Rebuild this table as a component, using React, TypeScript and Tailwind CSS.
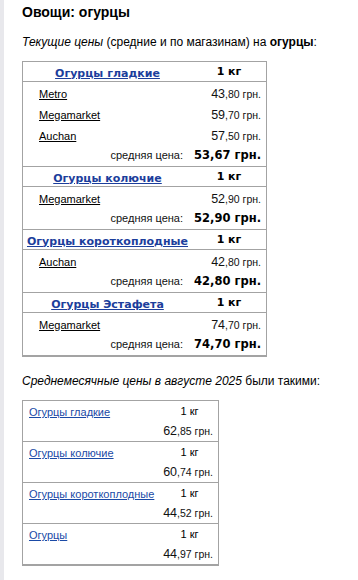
const groups = [
  {
    name: "Огурцы гладкие",
    shops: [
      { shop: "Metro", int: "43", frac: "80" },
      { shop: "Megamarket", int: "59", frac: "70" },
      { shop: "Auchan", int: "57", frac: "50" },
    ],
    avg: "53,67",
  },
  { name: "Огурцы колючие", shops: [{ shop: "Megamarket", int: "52", frac: "90" }], avg: "52,90" },
  { name: "Огурцы короткоплодные", shops: [{ shop: "Auchan", int: "42", frac: "80" }], avg: "42,80" },
  { name: "Огурцы Эстафета", shops: [{ shop: "Megamarket", int: "74", frac: "70" }], avg: "74,70" },
];

const monthly = [
  { name: "Огурцы гладкие", int: "62", frac: "85" },
  { name: "Огурцы колючие", int: "60", frac: "74" },
  { name: "Огурцы короткоплодные", int: "44", frac: "52" },
  { name: "Огурцы", int: "44", frac: "97" },
];

const verdana = "font-['DejaVu_Sans',Verdana,sans-serif]";

function Price({ int, frac }: { int: string; frac: string }) {
  return (
    <span className="whitespace-nowrap text-[12.5px] text-[#111]">
      {int}
      <span className="text-[10.5px]">,{frac} грн.</span>
    </span>
  );
}

export default function App() {
  return (
    <div className="flex min-h-[580px] bg-white font-['Liberation_Sans',Arial,sans-serif] text-black">
      <div className="w-[4px] shrink-0 bg-[#e8e8ec]" />
      <div className="pl-[18px] pt-[2px]">
        <h1 className="text-[14px] font-bold leading-[20px]">Овощи: огурцы</h1>

        <p className="mt-[11px] text-[12px] leading-[18px]">
          <i>Текущие цены</i> (средние и по магазинам) на <b>огурцы</b>:
        </p>

        <div className="mt-[10px] w-[245px] border border-b-2 border-[#a3a3a3]">
          {groups.map((g, gi) => (
            <div key={g.name} className={gi > 0 ? "border-t border-[#a3a3a3]" : ""}>
              <div className="flex h-[20px] items-center border-b border-[#a3a3a3] leading-none">
                <div className="w-[169px] text-center">
                  <a href="#" className={`${verdana} text-[11px] font-bold text-[#1c3e9c] underline`}>
                    {g.name}
                  </a>
                </div>
                <div className={`flex-1 text-center ${verdana} text-[11px] font-bold`}>1 кг</div>
              </div>
              {g.shops.map((s) => (
                <div key={s.shop} className="flex h-[21px] items-center">
                  <div className="w-[169px] pl-[16px]">
                    <a href="#" className="text-[11px] text-black underline">
                      {s.shop}
                    </a>
                  </div>
                  <div className="flex-1 pr-[5px] text-right">
                    <Price int={s.int} frac={s.frac} />
                  </div>
                </div>
              ))}
              <div className="flex h-[21px] items-center">
                <div className="w-[169px] pr-[9px] text-right text-[11px] text-[#111]">средняя цена:</div>
                <div className={`flex-1 whitespace-nowrap pr-[5px] text-right ${verdana} text-[11.5px] font-bold`}>
                  {g.avg} грн.
                </div>
              </div>
            </div>
          ))}
        </div>

        <p className="mt-[15px] text-[12px] leading-[18px]">
          <i>Среднемесячные цены в августе 2025</i> были такими:
        </p>

        <div className="mt-[10px] w-[197px] border border-b-2 border-[#a3a3a3]">
          {monthly.map((m, i) => (
            <div key={m.name} className={i > 0 ? "border-t border-[#a3a3a3]" : ""}>
              <div className="flex h-[20px] items-center">
                <div className="w-[138px] pl-[6px]">
                  <a href="#" className="whitespace-nowrap text-[11px] text-[#1a4aa6] underline">
                    {m.name}
                  </a>
                </div>
                <div className="flex-1 text-center text-[11px]">1 кг</div>
              </div>
              <div className="flex h-[20px] items-center justify-end pr-[5px]">
                <Price int={m.int} frac={m.frac} />
              </div>
            </div>
          ))}
        </div>
      </div>
    </div>
  );
}
